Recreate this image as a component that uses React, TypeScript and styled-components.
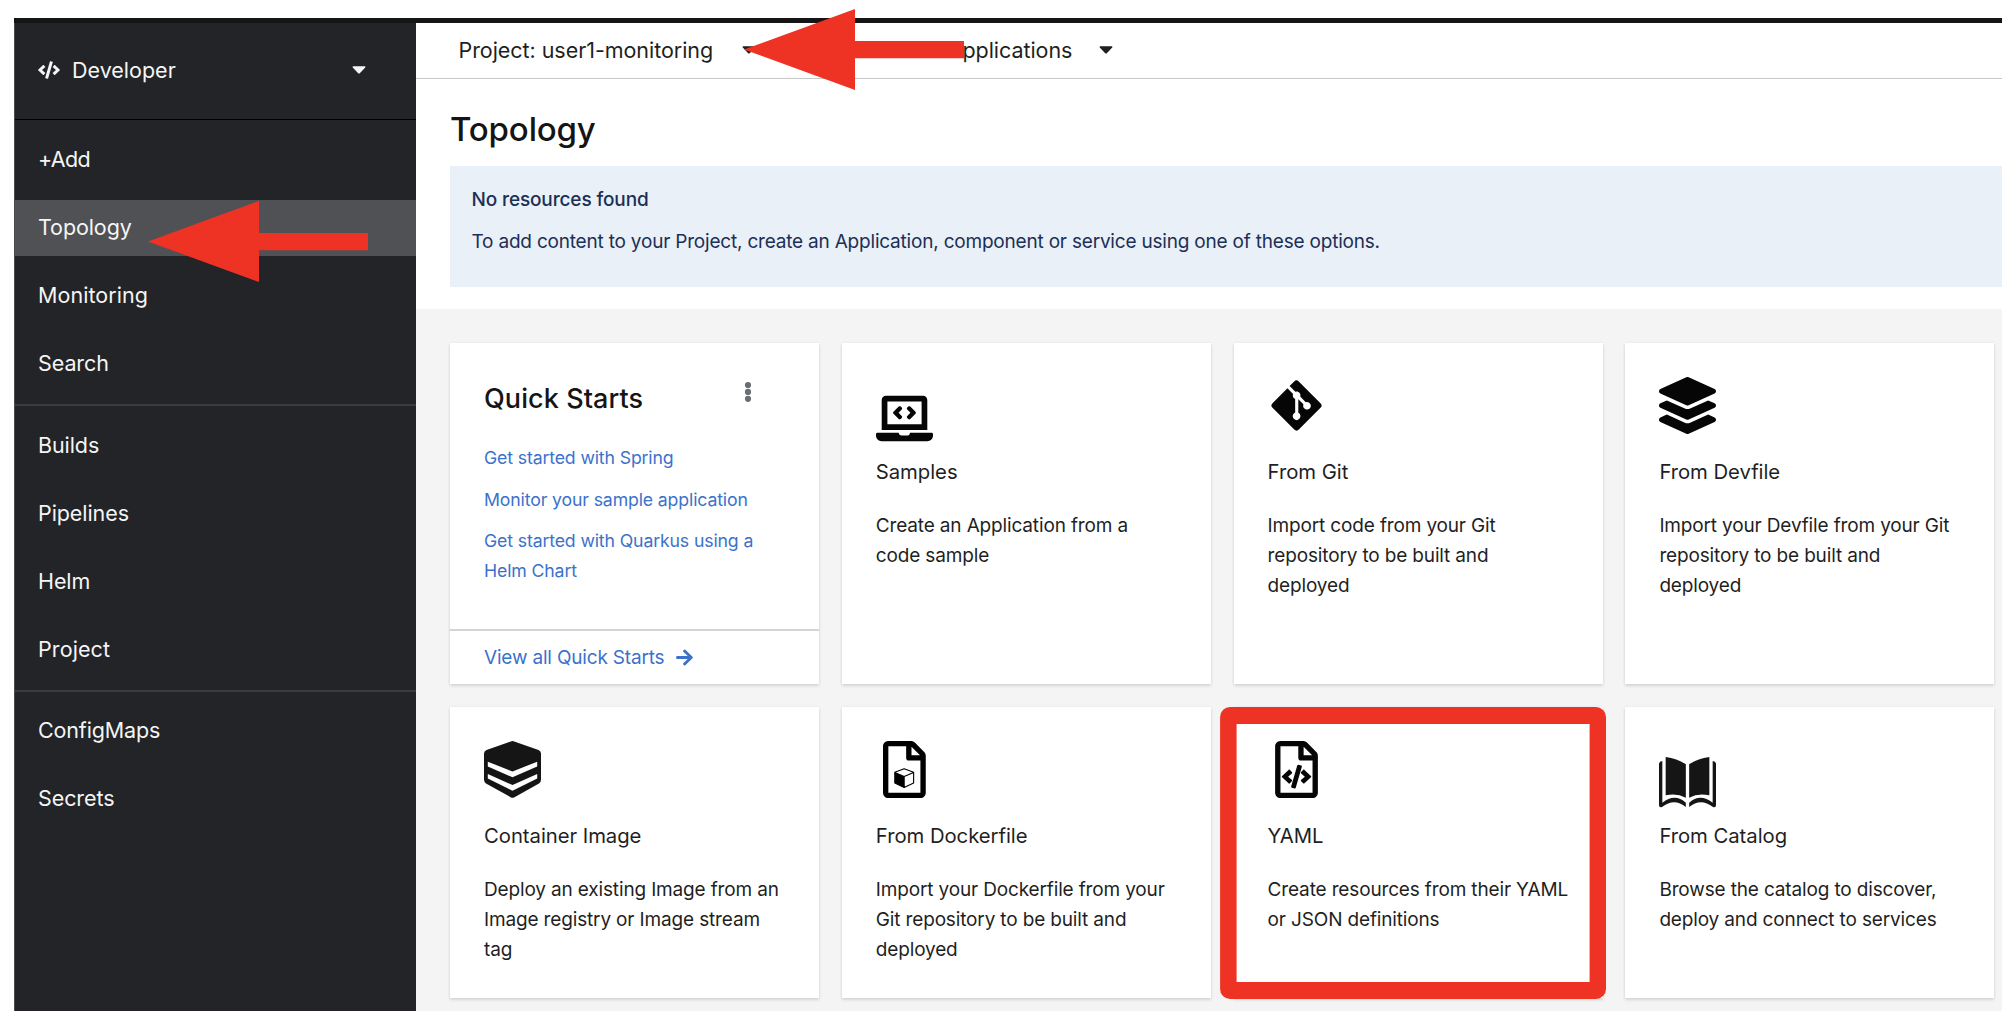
import React from "react";
import styled, { createGlobalStyle } from "styled-components";
import { FaArrowRight, FaCode, FaGitAlt, FaLaptopCode, FaLayerGroup, FaRegFileCode } from "react-icons/fa";

const red = "#ee3324";
const link = "#3b72cb";

const GlobalStyle = createGlobalStyle`
  *, *::before, *::after { box-sizing: border-box; }
  body {
    margin: 0;
    background: #fff;
    color: #1f1f1f;
    font-family: Inter, Roboto, "Liberation Sans", sans-serif;
    overflow: hidden;
  }
  svg { display: block; flex: none; }
`;

const Page = styled.div`
  height: 1020px;
  padding: 18px 0 9.5px 14px;
`;

const Frame = styled.div`
  display: flex;
  flex-direction: column;
  height: 100%;
  border-top: 5px solid #151515;
`;

const Columns = styled.div`
  display: flex;
  flex: 1;
  min-height: 0;
`;

const Sidebar = styled.nav`
  flex: none;
  width: 402px;
  background: #222427;
  color: #f5f5f5;
  border-left: 1px solid #4a4c4f;
`;

const Perspective = styled.div`
  display: flex;
  align-items: center;
  height: 97.3px;
  padding: 0 50px 2px 23px;
  gap: 12px;
  border-bottom: 1.5px solid #000;
  font-size: 21.5px;
  letter-spacing: 0;
`;

const PerspectiveName = styled.span`
  flex: 1;
`;

const NavGroup = styled.div`
  display: flex;
  flex-direction: column;
  gap: 11.4px;
  padding: 11.4px 0;

  & + & {
    border-top: 2px solid #3a3c40;
  }

  & + & + & {
    padding-top: 10.8px;
  }
`;

const NavItem = styled.div<{ $active?: boolean; $tracking?: number }>`
  position: relative;
  display: flex;
  align-items: center;
  height: 56.7px;
  padding: 0 23px 1.6px;
  background: ${(p) => (p.$active ? "#4f5154" : "transparent")};
  font-size: 21.5px;
  letter-spacing: ${(p) => p.$tracking ?? -0.08}px;
`;

const Main = styled.main`
  display: flex;
  flex: 1;
  flex-direction: column;
  min-width: 0;
`;

const Toolbar = styled.div`
  position: relative;
  display: flex;
  align-items: center;
  height: 56px;
  padding: 0 0 1.5px 42.5px;
  border-bottom: 1.5px solid #c8c8c8;
  font-size: 21.5px;
  letter-spacing: -0.05px;
  white-space: nowrap;
`;

const Selector = styled.div<{ $width: number }>`
  display: flex;
  align-items: center;
  justify-content: space-between;
  width: ${(p) => p.$width}px;

  & + & {
    margin-left: 41px;
  }
`;

const ArrowMark = styled.svg<{ $left: number; $top: number }>`
  position: absolute;
  left: ${(p) => p.$left}px;
  top: ${(p) => p.$top}px;
  width: 220px;
  height: 81px;
  z-index: 2;
  fill: ${red};
`;

const Heading = styled.div`
  height: 230px;
  padding-left: 34px;
`;

const Title = styled.h1`
  height: 87px;
  margin: 0;
  padding-top: 28px;
  font-size: 33px;
  font-weight: 500;
  line-height: 44px;
  letter-spacing: -0.15px;
  color: #151515;
`;

const Notice = styled.section`
  height: 120.5px;
  padding: 18.5px 21.5px;
  background: #e9f0f8;
  color: #1c2f55;
`;

const NoticeTitle = styled.div`
  font-size: 19px;
  font-weight: 500;
  line-height: 29.8px;
  letter-spacing: -0.13px;
`;

const NoticeText = styled.p`
  margin: 13px 0 0;
  font-size: 19px;
  line-height: 29.8px;
  letter-spacing: -0.2px;
  white-space: nowrap;
`;

const Catalog = styled.div`
  display: grid;
  flex: 1;
  grid-template-columns: repeat(4, 369px);
  grid-template-rows: 341px 291px;
  gap: 23px 22.8px;
  align-content: start;
  padding: 34px 0 0 34px;
  background: #f4f4f4;
`;

const Card = styled.article`
  position: relative;
  display: flex;
  flex-direction: column;
  padding: 34px 0 0 34px;
  background: #fff;
  box-shadow: 0 2px 3px rgba(3, 3, 3, 0.12), 0 0 3px rgba(3, 3, 3, 0.06);
`;

const IconSlot = styled.div<{ $drop?: number }>`
  display: flex;
  align-items: flex-start;
  justify-content: center;
  width: 57px;
  height: 57px;
  padding-top: ${(p) => p.$drop ?? 0}px;
  color: #060606;
`;

const CardTitle = styled.h3`
  margin: 23.3px 0 0;
  font-size: 20.3px;
  font-weight: 400;
  line-height: 30px;
  letter-spacing: -0.04px;
`;

const CardText = styled.p`
  margin: 23.7px 0 0;
  font-size: 19px;
  line-height: 30px;
  letter-spacing: -0.15px;
  white-space: pre;
`;

const QuickHeader = styled.div`
  display: flex;
  justify-content: space-between;
  padding: 4px 67px 0 0;
`;

const QuickTitle = styled.h2`
  margin: 0;
  font-size: 27px;
  font-weight: 500;
  line-height: 35px;
  letter-spacing: 0.08px;
  color: #151515;
`;

const QuickLinks = styled.div`
  display: flex;
  flex: 1;
  flex-direction: column;
  gap: 11.5px;
  padding-top: 27.4px;
`;

const QuickLink = styled.a`
  color: ${link};
  font-size: 17.7px;
  line-height: 29.8px;
  letter-spacing: -0.14px;
  white-space: pre;
`;

const QuickFooter = styled.div`
  display: flex;
  align-items: center;
  gap: 11px;
  height: 55px;
  margin-left: -34px;
  padding: 0 0 1px 34px;
  border-top: 2px solid #d4d4d4;
  color: ${link};
  font-size: 19px;
  letter-spacing: -0.18px;
`;

const Highlight = styled.div`
  position: absolute;
  inset: 0 -3.5px -1px -13.5px;
  border-radius: 10px;
  background: ${red};
  clip-path: polygon(evenodd, 0 0, 100% 0, 100% 100%, 0 100%, 0 0, 16.5px 17px, 16.5px calc(100% - 17px), calc(100% - 16.5px) calc(100% - 17px), calc(100% - 16.5px) 17px, 16.5px 17px);
`;

const Arrow = ({ left, top }: { left: number; top: number }) => (
  <ArrowMark $left={left} $top={top} viewBox="0 0 220 81">
    <path d="M0 40.5L111 0v32h109v17.3H111V81z" />
  </ArrowMark>
);

const Kebab = () => (
  <svg width="8" height="22" viewBox="0 0 8 22" fill="#6a6e73">
    <circle cx="4" cy="4" r="3.1" />
    <circle cx="4" cy="10.9" r="3.1" />
    <circle cx="4" cy="17.8" r="3.1" />
  </svg>
);

const ImageStackIcon = () => (
  <svg width="57" height="57" viewBox="0 0 57 57">
    <path
      fill="#151515"
      d="M26.8.4Q28.5-.3 30.2.4L54.5 9Q57 10 57 12.5V38.5Q57 41 55 42.5L30 56.4Q28.5 57.3 27 56.4L2 42.5Q0 41 0 38.5V12.5Q0 10 2.5 9Z"
    />
    <path fill="#fff" d="M3.8 20.7L28.5 30.5L53.2 20.7V25.6L28.5 36.3L3.8 25.6Z" />
    <path fill="#fff" d="M3.8 33L28.5 44L53.2 33V37.6L28.5 49.8L3.8 37.6Z" />
  </svg>
);

const DockerfileIcon = () => (
  <svg width="42.75" height="57" viewBox="0 0 384 512">
    <path d="M369.9 97.9L286 14C277 5 264.8-.1 252.1-.1H48C21.5 0 0 21.5 0 48v416c0 26.5 21.5 48 48 48h288c26.5 0 48-21.5 48-48V131.9c0-12.7-5.1-25-14.1-34zM332.1 128H256V51.9l76.1 76.1zM48 464V48h160v104c0 13.3 10.7 24 24 24h104v288H48z" />
    <path d="M106 282L190 318V418L106 377Z" />
    <path
      d="M190 249L275 280V377L190 417L106 377V280ZM106 282L190 318L275 282M190 318V417"
      fill="none"
      stroke="#000"
      strokeWidth="10"
      strokeLinejoin="round"
    />
  </svg>
);

const BookHalf = () => (
  <g fill="#151515">
    <path d="M20 0Q55 5 80.5 22V122Q53 107 20 115Z" />
    <path d="M10 12V137Q48 108 80.5 137V150Q46 122 9 150Q0 153 0 144V20Q1 13 10 12Z" />
  </g>
);

const BookIcon = () => (
  <svg width="57" height="51" viewBox="0 0 171 153">
    <BookHalf />
    <g transform="matrix(-1 0 0 1 171 0)">
      <BookHalf />
    </g>
  </svg>
);

const Caret = () => (
  <svg width="14" height="8" viewBox="0 0 14 8" fill="currentColor">
    <path d="M1.2.2H12.8Q14 .4 13.2 1.5L7.8 7.2Q7 8 6.2 7.2L.8 1.5Q0 .4 1.2.2Z" />
  </svg>
);

const navGroups: { label: string; tracking?: number; active?: boolean }[][] = [
  [
    { label: "+Add", tracking: -0.7 },
    { label: "Topology", active: true, tracking: -0.1 },
    { label: "Monitoring", tracking: 0.05 },
    { label: "Search" },
  ],
  [{ label: "Builds" }, { label: "Pipelines" }, { label: "Helm" }, { label: "Project", tracking: 0.1 }],
  [{ label: "ConfigMaps", tracking: -0.15 }, { label: "Secrets" }],
];

const quickStarts = [
  "Get started with Spring",
  "Monitor your sample application",
  "Get started with Quarkus using a\nHelm Chart",
];

const cards: { title: string; text: string; icon: React.ReactNode; drop?: number; marked?: boolean }[] = [
  { title: "Samples", text: "Create an Application from a\ncode sample", icon: <FaLaptopCode size={57} />, drop: 13 },
  { title: "From Git", text: "Import code from your Git\nrepository to be built and\ndeployed", icon: <FaGitAlt size={57} /> },
  { title: "From Devfile", text: "Import your Devfile from your Git\nrepository to be built and\ndeployed", icon: <FaLayerGroup size={57} /> },
  { title: "Container Image", text: "Deploy an existing Image from an\nImage registry or Image stream\ntag", icon: <ImageStackIcon /> },
  { title: "From Dockerfile", text: "Import your Dockerfile from your\nGit repository to be built and\ndeployed", icon: <DockerfileIcon /> },
  { title: "YAML", text: "Create resources from their YAML\nor JSON definitions", icon: <FaRegFileCode size={57} />, marked: true },
  { title: "From Catalog", text: "Browse the catalog to discover,\ndeploy and connect to services", icon: <BookIcon />, drop: 16 },
];

export default function App() {
  return (
    <Page>
      <GlobalStyle />
      <Frame>
        <Columns>
          <Sidebar>
            <Perspective>
              <FaCode size={22} />
              <PerspectiveName>Developer</PerspectiveName>
              <Caret />
            </Perspective>
            {navGroups.map((group) => (
              <NavGroup key={group[0].label}>
                {group.map((item) => (
                  <NavItem key={item.label} $active={item.active} $tracking={item.tracking}>
                    {item.label}
                    {item.active && <Arrow left={133} top={1} />}
                  </NavItem>
                ))}
              </NavGroup>
            ))}
          </Sidebar>
          <Main>
            <Toolbar>
              <Selector $width={297}>
                Project: user1-monitoring
                <Caret />
              </Selector>
              <Selector $width={316}>
                Application: all applications
                <Caret />
              </Selector>
              <Arrow left={328} top={-14} />
            </Toolbar>
            <Heading>
              <Title>Topology</Title>
              <Notice>
                <NoticeTitle>No resources found</NoticeTitle>
                <NoticeText>
                  To add content to your Project, create an Application, component or service using one of these options.
                </NoticeText>
              </Notice>
            </Heading>
            <Catalog>
              <Card>
                <QuickHeader>
                  <QuickTitle>Quick Starts</QuickTitle>
                  <Kebab />
                </QuickHeader>
                <QuickLinks>
                  {quickStarts.map((label) => (
                    <QuickLink key={label}>{label}</QuickLink>
                  ))}
                </QuickLinks>
                <QuickFooter>
                  View all Quick Starts
                  <FaArrowRight size={19} />
                </QuickFooter>
              </Card>
              {cards.map((card) => (
                <Card key={card.title}>
                  {card.marked && <Highlight />}
                  <IconSlot $drop={card.drop}>{card.icon}</IconSlot>
                  <CardTitle>{card.title}</CardTitle>
                  <CardText>{card.text}</CardText>
                </Card>
              ))}
            </Catalog>
          </Main>
        </Columns>
      </Frame>
    </Page>
  );
}
